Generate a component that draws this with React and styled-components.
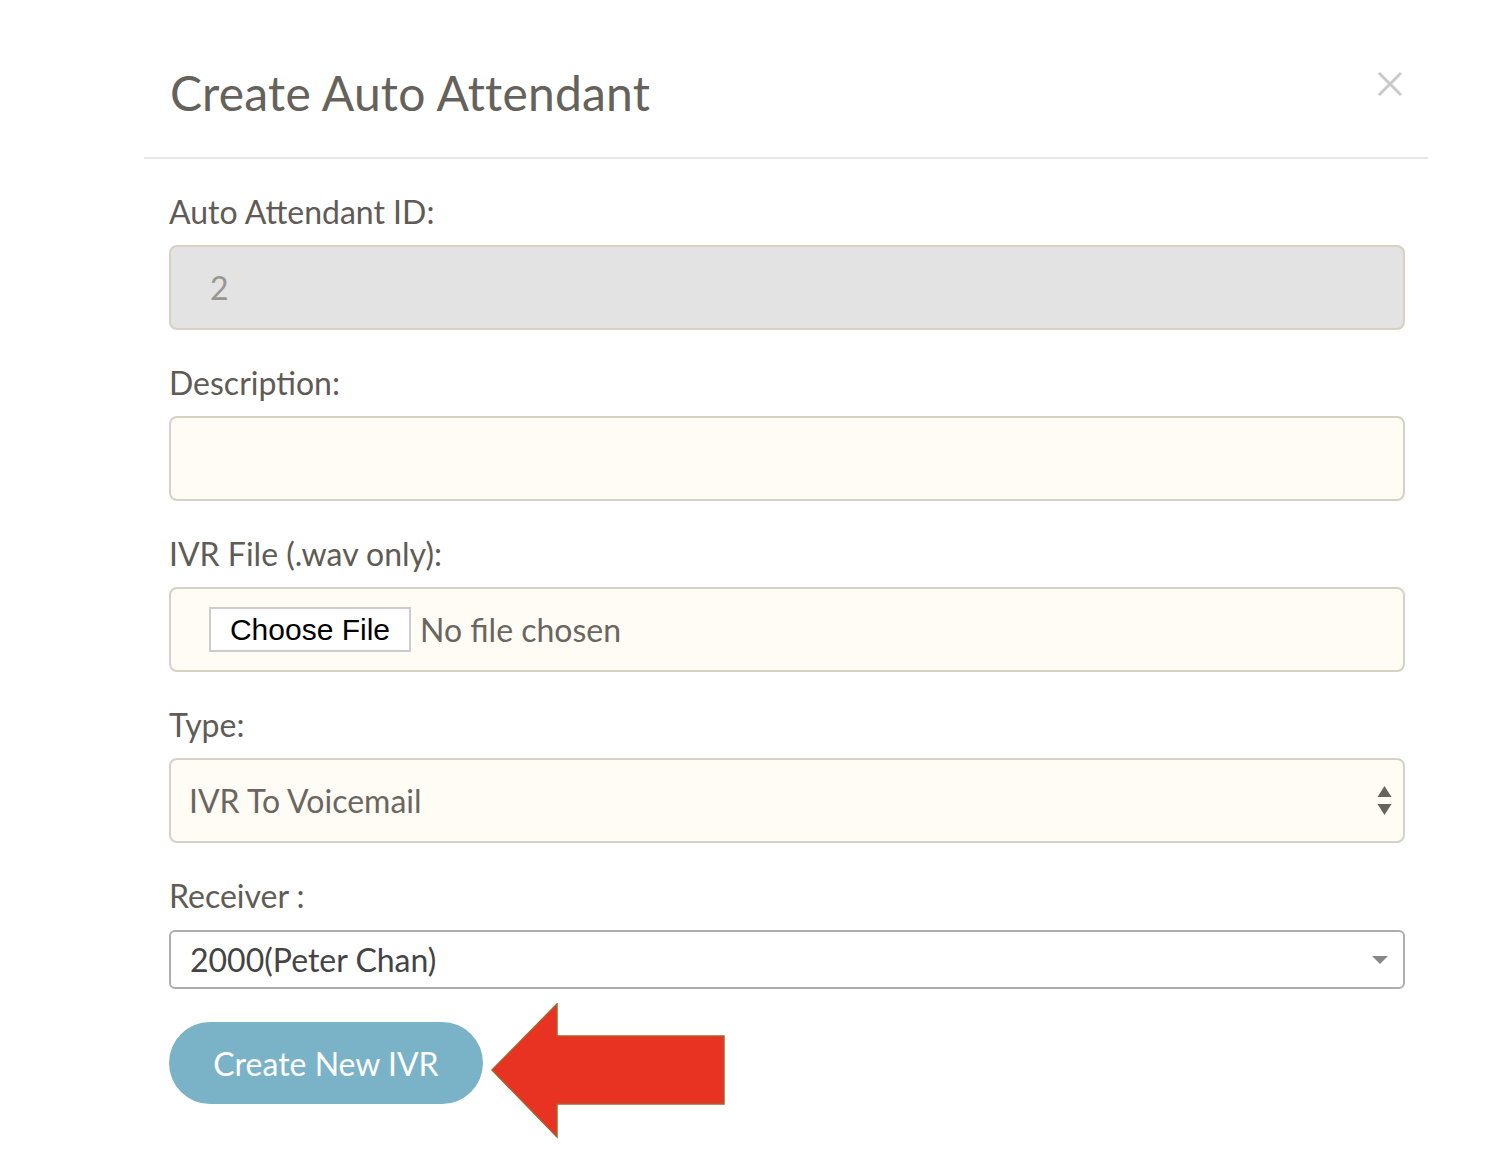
import React from "react";
import styled, { createGlobalStyle } from "styled-components";

const GlobalStyle = createGlobalStyle`
  body {
    margin: 0;
    background: #ffffff;
    font-family: Lato, "Noto Sans", sans-serif;
  }
`;

const Modal = styled.div`
  width: 1284px;
  margin-left: 144px;
`;

const Header = styled.div`
  display: flex;
  justify-content: space-between;
  align-items: flex-start;
  height: 159px;
  padding: 0 25px 0 26px;
  border-bottom: 2px solid #e6e6e6;
  box-sizing: border-box;
`;

const Title = styled.h1`
  margin: 63px 0 0;
  font-size: 48px;
  line-height: 60px;
  font-weight: 400;
  color: #65615b;
  letter-spacing: 0.2px;
`;

const CloseButton = styled.button`
  margin-top: 70px;
  padding: 0;
  border: none;
  background: none;
  width: 26px;
  height: 28px;
  cursor: pointer;
`;

const Body = styled.form`
  padding: 33px 23px 0 25px;
`;

const Field = styled.div`
  margin-bottom: ${(p) => p.$gap || 33}px;
`;

const Label = styled.label`
  display: block;
  margin-bottom: ${(p) => p.$gap || 13}px;
  font-size: 32px;
  line-height: 40px;
  color: #5f5b55;
`;

const Box = styled.div`
  display: flex;
  align-items: center;
  height: 85px;
  box-sizing: border-box;
  padding-left: ${(p) => p.$pad || 18}px;
  padding-right: 10px;
  border: 2px solid #d6d0c5;
  border-radius: 8px;
  background: ${(p) => p.$bg || "#fffcf6"};
  font-size: 32px;
  color: ${(p) => p.$color || "#6b665f"};
`;

const TextInput = styled.input`
  flex: 1;
  border: none;
  outline: none;
  background: transparent;
  font-family: inherit;
  font-size: 32px;
  color: #999590;
  padding: 0;
`;

const FileButton = styled.span`
  display: inline-flex;
  align-items: center;
  justify-content: center;
  width: 202px;
  height: 45px;
  box-sizing: border-box;
  border: 2px solid #cccccc;
  background: #ffffff;
  font-family: "Liberation Sans", Arial, sans-serif;
  font-size: 30px;
  color: #000000;
`;

const FileStatus = styled.span`
  margin-left: 9px;
  color: #6b655f;
`;

const SelectText = styled.span`
  flex: 1;
`;

const Receiver = styled.div`
  display: flex;
  align-items: center;
  height: 59px;
  box-sizing: border-box;
  padding: 0 14px 0 19px;
  border: 2px solid #adadad;
  border-radius: 6px;
  background: #ffffff;
  font-size: 32px;
  color: #444444;
`;

const Actions = styled.div`
  display: flex;
  align-items: flex-start;
  gap: 8px;
`;

const SubmitButton = styled.button`
  width: 314px;
  height: 82px;
  border: none;
  border-radius: 41px;
  background: #7ab2c8;
  color: #ffffff;
  font-family: inherit;
  font-size: 32px;
  cursor: pointer;
`;

const Pointer = styled.svg`
  margin-top: -19px;
`;

const UpDown = () => (
  <svg width="17" height="32" viewBox="0 0 17 32">
    <path d="M8.5 1 L15.5 12 L1.5 12 Z" fill="#66625c" />
    <path d="M8.5 30 L15.5 19 L1.5 19 Z" fill="#66625c" />
  </svg>
);

const Caret = () => (
  <svg width="18" height="10" viewBox="0 0 18 10">
    <path d="M1 1 L17 1 L9 9 Z" fill="#888888" />
  </svg>
);

export default function App() {
  return (
    <>
      <GlobalStyle />
      <Modal>
        <Header>
          <Title>Create Auto Attendant</Title>
          <CloseButton type="button" aria-label="Close">
            <svg width="26" height="28" viewBox="0 0 26 28">
              <path
                d="M2 3 L24 25 M24 3 L2 25"
                stroke="#c9c9c9"
                strokeWidth="3"
              />
            </svg>
          </CloseButton>
        </Header>

        <Body onSubmit={(e) => e.preventDefault()}>
          <Field>
            <Label>Auto Attendant ID:</Label>
            <Box $bg="#e3e3e3" $pad={39}>
              <TextInput value="2" readOnly />
            </Box>
          </Field>

          <Field>
            <Label>Description:</Label>
            <Box>
              <TextInput />
            </Box>
          </Field>

          <Field>
            <Label>IVR File (.wav only):</Label>
            <Box $pad={38}>
              <FileButton>Choose File</FileButton>
              <FileStatus>No file chosen</FileStatus>
            </Box>
          </Field>

          <Field>
            <Label>Type:</Label>
            <Box>
              <SelectText>IVR To Voicemail</SelectText>
              <UpDown />
            </Box>
          </Field>

          <Field>
            <Label $gap={14}>Receiver :</Label>
            <Receiver>
              <SelectText>2000(Peter Chan)</SelectText>
              <Caret />
            </Receiver>
          </Field>

          <Actions>
            <SubmitButton type="submit">Create New IVR</SubmitButton>
            <Pointer width="236" height="137" viewBox="0 0 236 137">
              <path
                d="M1 67 L66 1 L66 33 L233 33 L233 101 L66 101 L66 134 Z"
                fill="#e93322"
                stroke="#a5622e"
                strokeWidth="1.5"
              />
            </Pointer>
          </Actions>
        </Body>
      </Modal>
    </>
  );
}
